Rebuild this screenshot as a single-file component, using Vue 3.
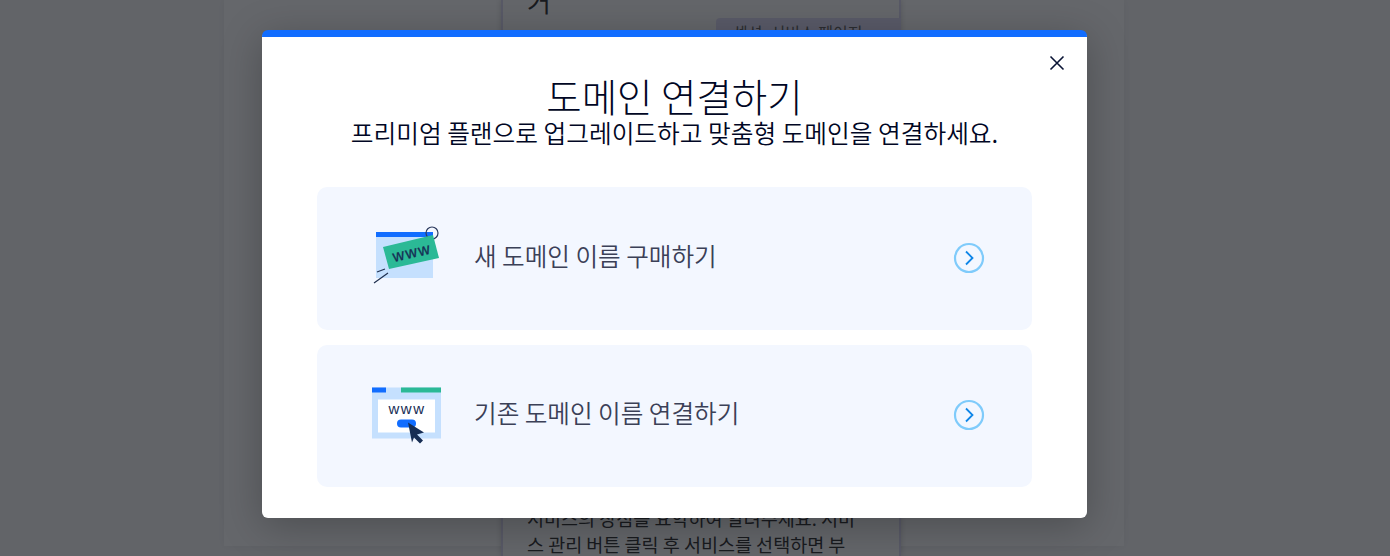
<template>
  <div class="page">
    <div class="sheet">
      <div class="column">
        <div class="heading">거</div>
        <div class="tag">섹션, 서비스 페이지</div>
        <p class="body-text">서비스의 장점을 요약하여 알려주세요. 서비스 관리 버튼 클릭 후 서비스를 선택하면 부</p>
      </div>
    </div>

    <div class="backdrop"></div>

    <div class="modal">
      <button class="close-btn" aria-label="닫기">
        <svg width="16" height="16" viewBox="0 0 16 16">
          <path d="M1.500 1.500l13 13M14.500 1.500l-13 13" stroke="#0a1435" stroke-width="1.600" fill="none" />
        </svg>
      </button>

      <h1 class="title">도메인 연결하기</h1>
      <p class="subtitle">프리미엄 플랜으로 업그레이드하고 맞춤형 도메인을 연결하세요.</p>

      <div class="options">
        <div class="option">
          <svg class="illust" width="80" height="71" viewBox="0 0 80 71">
            <rect x="9" y="9" width="57" height="46" fill="#c5e0fe" />
            <rect x="9" y="9" width="57" height="5" fill="#116dff" />
            <circle cx="65" cy="10" r="6" fill="none" stroke="#2b3a5e" stroke-width="1.200" />
            <path d="M16 24L66 12l6 23-50 11z" fill="#2bb996" />
            <text x="45" y="35" class="www www-bold" transform="rotate(-13 44 30)">www</text>
            <path d="M10 49l8-3M7 60l14-10" stroke="#20304f" stroke-width="1.200" fill="none" />
          </svg>
          <span class="option-label">새 도메인 이름 구매하기</span>
          <svg class="arrow" width="32" height="32" viewBox="0 0 32 32">
            <circle cx="16" cy="16" r="14" fill="none" stroke="#7fcbfb" stroke-width="2.200" />
            <path d="M13 9.500l6.500 6.500-6.500 6.500" fill="none" stroke="#0f86e8" stroke-width="1.800" />
          </svg>
        </div>

        <div class="option">
          <svg class="illust" width="80" height="71" viewBox="0 0 80 71">
            <rect x="5" y="7.500" width="69" height="51" fill="#c5e0fe" />
            <rect x="5" y="7.500" width="14" height="5" fill="#116dff" />
            <rect x="34" y="7.500" width="40" height="5" fill="#2bb996" />
            <rect x="11" y="19.500" width="57" height="33" fill="#fff" />
            <text x="40" y="33.500" class="www">www</text>
            <rect x="30" y="39.500" width="19" height="8" rx="4" fill="#116dff" />
            <path d="M41 42.500L57 52.500l-7 2 6 6-3 3-6-6-2 5z" fill="#162d54" />
          </svg>
          <span class="option-label">기존 도메인 이름 연결하기</span>
          <svg class="arrow" width="32" height="32" viewBox="0 0 32 32">
            <circle cx="16" cy="16" r="14" fill="none" stroke="#7fcbfb" stroke-width="2.200" />
            <path d="M13 9.500l6.500 6.500-6.500 6.500" fill="none" stroke="#0f86e8" stroke-width="1.800" />
          </svg>
        </div>
      </div>
    </div>
  </div>
</template>

<script setup>
</script>

<style>
body {
  margin: 0;
  overflow: hidden;
}
</style>

<style scoped>
.page {
  position: relative;
  width: 1390px;
  height: 556px;
  overflow: hidden;
  background: #f6f6f7;
  font-family: "Noto Sans CJK KR", "Noto Sans", sans-serif;
}

.sheet {
  width: 900px;
  height: 546px;
  margin-left: 224px;
  background: #fff;
  box-shadow: 0 0 8px rgba(0, 0, 0, 0.06);
}

.column {
  position: relative;
  width: 400px;
  height: 556px;
  margin-left: 277px;
  box-sizing: border-box;
  background: #fcfcfc;
  box-shadow: 0 0 6px rgba(0, 0, 0, 0.2);
  border-right: 2px solid #d9d6f0;
  border-left: 2px solid #d9d6f0;
  padding: 0 24px;
  color: #222;
  display: flex;
  flex-direction: column;
}

.heading {
  font-size: 26px;
  line-height: 26px;
  margin-top: -12px;
}

.tag {
  align-self: flex-end;
  margin-top: 4px;
  margin-right: -26px;
  width: 185px;
  height: 30px;
  box-sizing: border-box;
  padding: 2px 0 0 17px;
  border-radius: 4px 0 0 0;
  background: #dcdaf5;
  color: #555;
  font-size: 16px;
  white-space: nowrap;
}

.body-text {
  position: absolute;
  top: 505px;
  width: 340px;
  margin: 0;
  font-size: 18.500px;
  line-height: 26px;
  word-break: break-all;
}

.backdrop {
  position: absolute;
  inset: 0;
  background: rgba(22, 24, 30, 0.66);
}

.modal {
  position: absolute;
  left: 262px;
  top: 30px;
  width: 825px;
  height: 488px;
  box-sizing: border-box;
  background: #fff;
  border-top: 7px solid #116dff;
  border-radius: 6px;
  padding: 35px 55px 31px;
  box-shadow: 0 8px 40px rgba(0, 0, 0, 0.25);
  display: flex;
  flex-direction: column;
  color: #000624;
}

.close-btn {
  position: absolute;
  top: 18px;
  right: 22px;
  padding: 0;
  border: none;
  background: none;
  display: flex;
}

.title {
  margin: 0;
  font-size: 38.500px;
  font-weight: 300;
  line-height: 46px;
  text-align: center;
}

.subtitle {
  margin: 0;
  font-size: 24.700px;
  font-weight: 350;
  line-height: 28px;
  text-align: center;
}

.options {
  margin-top: 41px;
  display: flex;
  flex-direction: column;
  gap: 15px;
  flex: 1;
}

.option {
  flex: 1;
  display: flex;
  align-items: center;
  background: #f3f7ff;
  border-radius: 10px;
  padding: 0 47px 0 50px;
}

.illust {
  flex-shrink: 0;
}

.option-label {
  flex: 1;
  margin-left: 27px;
  margin-bottom: 7px;
  font-size: 24.600px;
  font-weight: 350;
  color: #3b4057;
}

.arrow {
  flex-shrink: 0;
  margin-top: -1px;
}

.www {
  font-family: "Liberation Sans", sans-serif;
  font-size: 15px;
  letter-spacing: 1.500px;
  text-anchor: middle;
  fill: #162d54;
}

.www-bold {
  font-size: 16px;
  stroke: #162d54;
  stroke-width: 0.3px;
}
</style>
